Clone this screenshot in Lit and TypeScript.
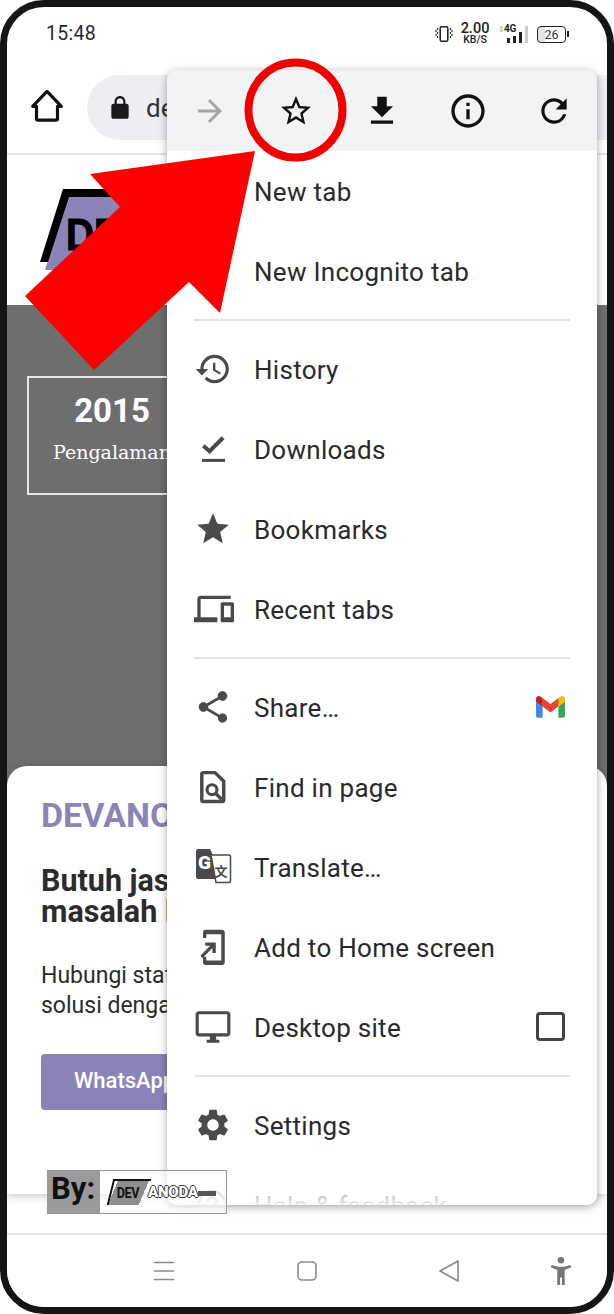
import { LitElement, html, css, svg } from "lit";
import { customElement } from "lit/decorators.js";

const ic = (d: string, size = 36, vb = "0 0 24 24") => html`
  <svg width=${size} height=${size} viewBox=${vb}><path d=${d} fill="currentColor"></path></svg>
`;

const P = {
  lock: "M18 8h-1V6c0-2.76-2.24-5-5-5S7 3.24 7 6v2H6c-1.1 0-2 .9-2 2v10c0 1.1.9 2 2 2h12c1.1 0 2-.9 2-2V10c0-1.1-.9-2-2-2zM9 6c0-1.66 1.34-3 3-3s3 1.34 3 3v2H9V6z",
  forward: "M12 4l-1.41 1.41L16.17 11H4v2h12.17l-5.58 5.59L12 20l8-8z",
  starO: "M22 9.24l-7.19-.62L12 2 9.19 8.63 2 9.24l5.46 4.73L5.82 21 12 17.27 18.18 21l-1.63-7.03L22 9.24zM12 15.4l-3.76 2.27 1-4.28-3.32-2.88 4.38-.38L12 6.1l1.71 4.04 4.38.38-3.32 2.88 1 4.28L12 15.4z",
  download: "M19 9h-4V3H9v6H5l7 7 7-7zM5 18v2h14v-2H5z",
  info: "M11 7h2v2h-2zm0 4h2v6h-2zm1-9C6.48 2 2 6.48 2 12s4.48 10 10 10 10-4.48 10-10S17.52 2 12 2zm0 18c-4.41 0-8-3.59-8-8s3.59-8 8-8 8 3.59 8 8-3.59 8-8 8z",
  refresh: "M17.65 6.35A7.958 7.958 0 0 0 12 4c-4.42 0-7.99 3.58-7.99 8s3.57 8 7.99 8c3.73 0 6.84-2.55 7.73-6h-2.08A5.99 5.99 0 0 1 12 18c-3.31 0-6-2.69-6-6s2.69-6 6-6c1.66 0 3.14.69 4.22 1.78L13 11h7V4l-2.35 2.35z",
  plus: "M19 13h-6v6h-2v-6H5v-2h6V5h2v6h6v2z",
  incognito: "M17.06 13c-1.86 0-3.42 1.33-3.82 3.1-.95-.41-1.82-.3-2.48-.01C10.35 14.31 8.79 13 6.94 13 4.77 13 3 14.79 3 17s1.77 4 3.94 4c2.06 0 3.74-1.62 3.9-3.68.34-.24 1.23-.69 2.32.02.18 2.05 1.84 3.66 3.9 3.66 2.17 0 3.94-1.79 3.94-4s-1.77-4-3.94-4zM22 10.5H2V12h20v-1.5zm-6.47-7.87c-.22-.49-.78-.75-1.31-.58L12 2.79l-2.23-.74-.05-.01c-.53-.15-1.09.13-1.29.64L6 9h12l-2.44-6.32-.03-.05z",
  history: "M13 3a9 9 0 0 0-9 9H1l3.89 3.89.07.14L9 12H6c0-3.87 3.13-7 7-7s7 3.13 7 7-3.13 7-7 7c-1.93 0-3.68-.79-4.94-2.06l-1.42 1.42A8.954 8.954 0 0 0 13 21a9 9 0 0 0 0-18zm-1 5v5l4.28 2.54.72-1.21-3.5-2.08V8H12z",
  star: "M12 17.27L18.18 21l-1.64-7.03L22 9.24l-7.19-.61L12 2 9.19 8.63 2 9.24l5.46 4.73L5.82 21z",
  devices: "M4 6h18V4H4c-1.1 0-2 .9-2 2v11H0v3h14v-3H4V6zm19 2h-6c-.55 0-1 .45-1 1v10c0 .55.45 1 1 1h6c.55 0 1-.45 1-1V9c0-.55-.45-1-1-1zm-1 9h-4v-7h4v7z",
  share: "M18 16.08c-.76 0-1.44.3-1.96.77L8.91 12.7c.05-.23.09-.46.09-.7s-.04-.47-.09-.7l7.05-4.11c.54.5 1.25.81 2.04.81 1.66 0 3-1.34 3-3s-1.34-3-3-3-3 1.34-3 3c0 .24.04.47.09.7L8.04 9.81C7.5 9.31 6.79 9 6 9c-1.66 0-3 1.34-3 3s1.34 3 3 3c.79 0 1.5-.31 2.04-.81l7.12 4.16c-.05.21-.08.43-.08.65 0 1.61 1.31 2.92 2.92 2.92s2.92-1.31 2.92-2.92-1.31-2.92-2.92-2.92z",
  desktop: "M21 2H3c-1.1 0-2 .9-2 2v12c0 1.1.9 2 2 2h7v2H8v2h8v-2h-2v-2h7c1.1 0 2-.9 2-2V4c0-1.1-.9-2-2-2zm0 14H3V4h18v12z",
  settings: "M19.14 12.94c.04-.3.06-.61.06-.94 0-.32-.02-.64-.07-.94l2.03-1.58a.49.49 0 0 0 .12-.61l-1.92-3.32a.488.488 0 0 0-.59-.22l-2.39.96c-.5-.38-1.03-.7-1.62-.94l-.36-2.54a.484.484 0 0 0-.48-.41h-3.84c-.24 0-.43.17-.47.41l-.36 2.54c-.59.24-1.13.57-1.62.94l-2.39-.96c-.22-.08-.47 0-.59.22L2.74 8.87c-.12.21-.08.47.12.61l2.03 1.58c-.05.3-.09.63-.09.94s.02.64.07.94l-2.03 1.58a.49.49 0 0 0-.12.61l1.92 3.32c.12.22.37.29.59.22l2.39-.96c.5.38 1.03.7 1.62.94l.36 2.54c.05.24.24.41.48.41h3.84c.24 0 .44-.17.47-.41l.36-2.54c.59-.24 1.13-.56 1.62-.94l2.39.96c.22.08.47 0 .59-.22l1.92-3.32c.12-.22.07-.47-.12-.61l-2.01-1.58zM12 15.6c-1.98 0-3.6-1.62-3.6-3.6s1.62-3.6 3.6-3.6 3.6 1.62 3.6 3.6-1.62 3.6-3.6 3.6z",
  help: "M11 18h2v-2h-2v2zm1-16C6.48 2 2 6.48 2 12s4.48 10 10 10 10-4.48 10-10S17.52 2 12 2zm0 18c-4.41 0-8-3.59-8-8s3.59-8 8-8 8 3.59 8 8-3.59 8-8 8zm0-14c-2.21 0-4 1.79-4 4h2c0-1.1.9-2 2-2s2 .9 2 2c0 2-3 1.75-3 5h2c0-2.25 3-2.5 3-5 0-2.21-1.79-4-4-4z",
};

const homeIcon = html`
  <svg width="40" height="40" viewBox="0 0 24 24" fill="none" stroke="#111" stroke-width="1.900" stroke-linejoin="round">
    <path d="M12 3.200 3.400 12.200h2.300v7.300a1 1 0 0 0 1 1h10.600a1 1 0 0 0 1-1v-7.300h2.300z"></path>
  </svg>
`;

const doneIcon = html`
  <svg width="36" height="36" viewBox="0 0 24 24" fill="none" stroke="currentColor">
    <path d="M6.200 9.800l4.200 3.700 9-9" stroke-width="2.700"></path>
    <path d="M5.300 19.600h15.400" stroke-width="2"></path>
  </svg>
`;

const findIcon = html`
  <svg width="36" height="36" viewBox="0 0 24 24" fill="none" stroke="currentColor">
    <path d="M6.200 2.400h7.800l5.800 5.800v12.400a1 1 0 0 1-1 1H6.200a1 1 0 0 1-1-1V3.400a1 1 0 0 1 1-1z" stroke-width="2.300"></path>
    <circle cx="12" cy="13.800" r="3.300" stroke-width="2.100"></circle>
    <path d="M14.400 16.200 18.500 20.300" stroke-width="2.300"></path>
  </svg>
`;

const translateIcon = html`
  <svg width="38" height="38" viewBox="0 0 38 38">
    <path d="M4 1h12l2 4 8 26H4a2 2 0 0 1-2-2V3a2 2 0 0 1 2-2z" fill="#4a4a4a"></path>
    <path d="M17 7h18a1.500 1.500 0 0 1 1.500 1.500V33a1.500 1.500 0 0 1-1.500 1.500H22z" fill="#fff" stroke="#4a4a4a" stroke-width="1.500"></path>
    <text x="10.500" y="21" font-family="Roboto" font-weight="900" font-size="19" fill="#fff" text-anchor="middle">G</text>
    <text x="27" y="28" font-family="'Noto Sans CJK SC'" font-weight="700" font-size="13" fill="#4a4a4a" text-anchor="middle">文</text>
  </svg>
`;

const addHomeIcon = html`
  <svg width="36" height="38" viewBox="0 0 24 25" fill="currentColor">
    <path d="M8 1h10.500a2 2 0 0 1 2 2v19.500a2 2 0 0 1-2 2H8a2 2 0 0 1-2-2V19h2.200v2.500h10V4h-10v2.500H6V3a2 2 0 0 1 2-2z"></path>
    <path d="M7.500 9.500h7v7h-2.200v-3.300l-6.600 6.600-1.500-1.500 6.600-6.600H7.500z"></path>
  </svg>
`;

const gmailIcon = html`
  <svg width="29" height="22" viewBox="0 0 256 193">
    <path d="M58.182 192.05V93.14L27.507 65.077 0 49.504v125.091c0 9.658 7.825 17.455 17.455 17.455h40.727Z" fill="#4285F4"></path>
    <path d="M197.818 192.05h40.727c9.659 0 17.455-7.826 17.455-17.455V49.505l-31.156 17.837-27.026 25.798v98.91Z" fill="#34A853"></path>
    <path d="M58.182 93.14l-4.174-38.647 4.174-36.989L128 69.868l69.818-52.364 4.669 34.992-4.669 40.644L128 145.504z" fill="#EA4335"></path>
    <path d="M197.818 17.504V93.14L256 49.504V26.231c0-21.585-24.64-33.89-41.89-20.945l-16.292 12.218Z" fill="#FBBC04"></path>
    <path d="M0 49.504l26.759 20.07L58.182 93.14V17.504L41.89 5.286C24.61-7.66 0 4.646 0 26.23v23.273Z" fill="#C5221F"></path>
  </svg>
`;

const checkbox = html`<span class="check"></span>`;

type Item = { label: string; icon: unknown; end?: unknown };

const groups: Item[][] = [
  [
    { label: "New tab", icon: ic(P.plus) },
    { label: "New Incognito tab", icon: ic(P.incognito) },
  ],
  [
    { label: "History", icon: ic(P.history, 38) },
    { label: "Downloads", icon: doneIcon },
    { label: "Bookmarks", icon: ic(P.star, 38) },
    { label: "Recent tabs", icon: ic(P.devices, 40) },
  ],
  [
    { label: "Share…", icon: ic(P.share, 38), end: gmailIcon },
    { label: "Find in page", icon: findIcon },
    { label: "Translate…", icon: translateIcon },
    { label: "Add to Home screen", icon: addHomeIcon },
    { label: "Desktop site", icon: ic(P.desktop, 38), end: checkbox },
  ],
  [
    { label: "Settings", icon: ic(P.settings, 38) },
    { label: "Help & feedback", icon: ic(P.help, 36) },
  ],
];

@customElement("app-root")
export class AppRoot extends LitElement {
  renderRow(it: Item) {
    return html`
      <div class="row">
        <span class="row-icon">${it.icon}</span>
        <span class="row-label">${it.label}</span>
        ${it.end ? html`<span class="row-end">${it.end}</span>` : ""}
      </div>
    `;
  }

  render() {
    return html`
      <div class="phone">
        <header class="status">
          <span class="time">15:48</span>
          <div class="status-icons">
            <svg class="vibrate" width="18" height="16" viewBox="0 0 18 16" fill="none" stroke="#222">
              <rect x="5.200" y="0.800" width="7.600" height="14.400" rx="1.500" stroke-width="1.600"></rect>
              <path d="M2.500 2v2M1 4v2M2.500 6v2M1 8v2M2.500 10v2M15.500 2v2M17 4v2M15.500 6v2M17 8v2M15.500 10v2" stroke-width="1.200"></path>
            </svg>
            <div class="speed"><b>2.00</b><small>KB/S</small></div>
            <div class="signal">
              <span class="arrows">⇕</span>
              <span class="g">4G</span>
              <div class="bars">
                <i style="height:5px"></i><i style="height:7px"></i><i style="height:11px"></i><i class="off" style="height:17px"></i>
              </div>
            </div>
            <div class="battery"><span class="level">26</span></div>
          </div>
        </header>

        <div class="toolbar">
          <span class="home">${homeIcon}</span>
          <div class="pill">
            <span class="lock">${ic(P.lock, 26)}</span>
            <span class="url">devanoda.com</span>
          </div>
        </div>

        <main class="page">
          <section class="brand">
            <svg width="170" height="90" viewBox="0 0 170 90">
              <path d="M28 9H140L120 82H5z" fill="#8a84b9"></path>
              <path d="M0 74 23 1H110V9H29L8 74z" fill="#000"></path>
              <text x="26" y="62" font-family="'Liberation Sans'" font-weight="700" font-size="44" fill="#000" stroke="#000" stroke-width="1" textLength="80" lengthAdjust="spacingAndGlyphs">DEV</text>
            </svg>
          </section>

          <section class="hero">
            <div class="stat">
              <strong>2015</strong>
              <span>Pengalaman</span>
            </div>
          </section>

          <section class="card">
            <h2>DEVANODA</h2>
            <h3>Butuh jasa perbaikan<br />masalah laptop?</h3>
            <p>Hubungi staf kami untuk<br />solusi dengan harga terbaik</p>
            <a class="wa">WhatsApp Kami</a>
          </section>
        </main>

        <nav class="nav">
          <svg width="22" height="20" viewBox="0 0 22 20" stroke="#8a8a8a" stroke-width="1.500"><path d="M1 1.500h20M1 10h20M1 18.500h20"></path></svg>
          <svg width="20" height="20" viewBox="0 0 20 20" fill="none" stroke="#8a8a8a" stroke-width="1.600"><rect x="1" y="1" width="18" height="18" rx="4"></rect></svg>
          <svg width="20" height="22" viewBox="0 0 20 22" fill="none" stroke="#8a8a8a" stroke-width="1.600" stroke-linejoin="round"><path d="M19 1 1 11l18 10z"></path></svg>
          <svg class="person" width="22" height="28" viewBox="0 0 22 30" fill="#777"><circle cx="11" cy="3.500" r="3.500"></circle><path d="M1 8.500 0 11l7 3v7.500V30h3v-8h2v8h3V14l7-3-1-2.500-7 2h-6z"></path></svg>
        </nav>

        <aside class="menu">
          <div class="menu-bar">
            <span class="off">${ic(P.forward, 36)}</span>
            <span>${ic(P.starO, 36)}</span>
            <span>${ic(P.download, 38)}</span>
            <span>${ic(P.info, 40)}</span>
            <span>${ic(P.refresh, 38)}</span>
          </div>
          ${groups.map(
            (g, i) => html`
              ${i > 0 ? html`<hr />` : ""}
              ${g.map((it) => this.renderRow(it))}
            `
          )}
          <div class="fade"></div>
        </aside>

        <div class="by">
          <span class="by-label">By:</span>
          <div class="by-logo">
            <span class="mini"><b>DEV</b></span>
            <span class="anoda">ANODA</span>
            <span class="tail"></span>
          </div>
        </div>

        <svg class="marks" width="614" height="1314" viewBox="0 0 614 1314">
          ${svg`<polygon points="255,151 90,174 120,207 25,296 94,370 189,282 220,313" fill="#fe0000"></polygon>
          <ellipse cx="295.500" cy="110" rx="47" ry="47.500" fill="none" stroke="#f20000" stroke-width="8"></ellipse>`}
        </svg>
      </div>
    `;
  }

  static styles = css`
    :host {
      display: block;
      width: 614px;
      height: 1314px;
      font-family: Roboto, "Noto Sans", sans-serif;
      color: #222;
    }
    .phone {
      position: relative;
      box-sizing: border-box;
      width: 614px;
      height: 1314px;
      border: 7px solid #151515;
      border-radius: 44px;
      background: #fff;
      display: flex;
      flex-direction: column;
      overflow: hidden;
    }
    .status {
      height: 52px;
      flex: none;
      display: flex;
      align-items: center;
      justify-content: space-between;
      padding: 0 39px 0 39px;
    }
    .time {
      font-size: 19.500px;
      letter-spacing: 0.3px;
      color: #2a2a2a;
    }
    .status-icons {
      display: flex;
      align-items: center;
    }
    .vibrate {
      margin-top: 2px;
    }
    .speed {
      display: flex;
      flex-direction: column;
      align-items: center;
      width: 28px;
      margin-left: 8px;
      color: #222;
    }
    .speed b {
      font-size: 14.500px;
      font-weight: 500;
      line-height: 12px;
    }
    .speed small {
      font-size: 10.500px;
      font-weight: 500;
      line-height: 9px;
    }
    .signal {
      position: relative;
      width: 30px;
      height: 18px;
      margin: 1px 0 0 9px;
    }
    .arrows {
      position: absolute;
      left: 0;
      top: 0;
      font-size: 8px;
      line-height: 9px;
      color: #aaa;
    }
    .g {
      position: absolute;
      left: 6px;
      top: -1px;
      font-size: 10px;
      line-height: 10px;
      font-weight: 700;
      letter-spacing: -0.3px;
    }
    .bars {
      position: absolute;
      right: 0;
      bottom: 0;
      display: flex;
      align-items: flex-end;
      gap: 3px;
    }
    .bars i {
      display: block;
      width: 3px;
      background: #222;
    }
    .bars i.off {
      background: #ccc;
    }
    .battery {
      position: relative;
      box-sizing: border-box;
      width: 29px;
      height: 17px;
      margin: 2px 2px 0 9px;
      border: 1.500px solid #222;
      border-radius: 4px;
      background: linear-gradient(90deg, #e4e4e4 26%, #fff 26%);
      display: flex;
      align-items: center;
      justify-content: center;
    }
    .battery::after {
      content: "";
      position: absolute;
      right: -4px;
      top: 4px;
      width: 2px;
      height: 6px;
      background: #222;
    }
    .level {
      font-size: 12.500px;
      color: #333;
    }
    .toolbar {
      height: 94px;
      flex: none;
      box-sizing: content-box;
      display: flex;
      align-items: center;
      padding-left: 20px;
      gap: 20px;
      border-bottom: 2px solid #e4e4e4;
      overflow: hidden;
      color: #111;
    }
    .home {
      display: flex;
    }
    .pill {
      flex: 1;
      height: 65px;
      margin-top: 3px;
      border-radius: 33px 0 0 33px;
      background: #eceef1;
      display: flex;
      align-items: center;
      padding-left: 20px;
      gap: 13px;
      font-size: 26px;
      color: #333;
    }
    .lock {
      display: flex;
      color: #1a1a1a;
    }
    .page {
      flex: 1;
      min-height: 0;
      overflow: hidden;
      display: flex;
      flex-direction: column;
    }
    .brand {
      height: 150px;
      flex: none;
      box-sizing: border-box;
      padding: 33px 0 0 33px;
    }
    .hero {
      height: 485px;
      flex: none;
      box-sizing: border-box;
      padding: 71px 0 0 20px;
      background: #6e6e6e;
    }
    .stat {
      box-sizing: border-box;
      width: 170px;
      height: 119px;
      border: 2px solid #e6e6e6;
      display: flex;
      flex-direction: column;
      align-items: center;
      color: #fff;
    }
    .stat strong {
      font-size: 33px;
      font-weight: 700;
      margin-top: 13px;
      line-height: 40px;
    }
    .stat span {
      font-family: "DejaVu Serif", "Liberation Serif", serif;
      font-size: 19px;
      margin-top: 10px;
      white-space: nowrap;
    }
    .card {
      position: relative;
      height: 428px;
      flex: none;
      margin-top: -24px;
      box-sizing: border-box;
      padding: 29px 0 0 34px;
      background: #fff;
      border-radius: 20px 20px 0 0;
      box-shadow: 0 2px 10px rgba(0, 0, 0, 0.22);
      white-space: nowrap;
    }
    .card h2 {
      margin: 0;
      font-size: 34px;
      line-height: 40px;
      font-weight: 700;
      color: #8a84b9;
    }
    .card h3 {
      margin: 31px 0 0;
      font-size: 30.500px;
      line-height: 30.500px;
      font-weight: 700;
      color: #2c2c2c;
    }
    .card p {
      margin: 34px 0 0;
      font-size: 23px;
      line-height: 30px;
      color: #2c2c2c;
    }
    .wa {
      display: block;
      width: 220px;
      height: 56px;
      margin-top: 33px;
      box-sizing: border-box;
      padding: 14px 0 0 33px;
      border-radius: 4px;
      background: #8a84b9;
      color: #fff;
      font-size: 22px;
      font-weight: 500;
    }
    .nav {
      height: 74px;
      flex: none;
      box-sizing: border-box;
      border-top: 2px solid #e2e2e2;
      background: #fff;
      display: flex;
      align-items: center;
      gap: 122px;
      padding-left: 146px;
    }
    .nav .person {
      margin-left: -31px;
    }
    .menu {
      position: absolute;
      left: 160px;
      top: 63px;
      width: 430px;
      height: 1135px;
      overflow: hidden;
      background: #fff;
      border-radius: 10px;
      box-shadow: 0 2px 8px rgba(0, 0, 0, 0.35);
    }
    .menu-bar {
      height: 81px;
      background: #f1f3f4;
      display: grid;
      grid-template-columns: repeat(5, 1fr);
      align-items: center;
      justify-items: center;
      color: #111;
    }
    .menu-bar span {
      display: flex;
    }
    .menu-bar .off {
      color: #a6a6a6;
    }
    .row {
      height: 80px;
      display: flex;
      align-items: center;
      padding: 0 32px 0 0;
    }
    .row-icon {
      width: 87px;
      padding-left: 27px;
      box-sizing: border-box;
      flex: none;
      display: flex;
      color: #4a4a4a;
    }
    .row-label {
      flex: 1;
      margin-top: 1px;
      font-size: 26px;
      letter-spacing: 0.28px;
      color: #2a2a2a;
      white-space: nowrap;
    }
    .row-end {
      display: flex;
    }
    .check {
      display: block;
      box-sizing: border-box;
      width: 29px;
      height: 29px;
      margin-top: -2px;
      border: 3px solid #444;
      border-radius: 4px;
    }
    hr {
      margin: 8px 27px 8px 27px;
      border: 0;
      height: 2px;
      background: #e2e2e2;
    }
    .fade {
      position: absolute;
      left: 0;
      right: 0;
      bottom: 0;
      height: 30px;
      background: linear-gradient(rgba(255, 255, 255, 0.3), rgba(255, 255, 255, 0.92));
    }
    .by {
      position: absolute;
      left: 40px;
      top: 1163px;
      display: flex;
      width: 180px;
      height: 44px;
      box-sizing: border-box;
      border: 1.500px solid #999;
    }
    .by-label {
      width: 52px;
      flex: none;
      background: #9a9a9a;
      font-size: 31px;
      font-weight: 700;
      line-height: 36px;
      padding-left: 3px;
      box-sizing: border-box;
      color: #111;
    }
    .by-logo {
      flex: 1;
      position: relative;
      background: rgba(255, 255, 255, 0.55);
      display: flex;
      align-items: center;
      padding-left: 10px;
    }
    .mini {
      box-sizing: border-box;
      width: 38px;
      height: 26px;
      padding: 5px 0 0 5px;
      background: linear-gradient(100deg, transparent 8%, #8e8e8e 8%, #8e8e8e 85%, transparent 85%);
      border-left: 2px solid #111;
      border-top: 2px solid #111;
      transform: skewX(-14deg);
      font-size: 14px;
      line-height: 14px;
      letter-spacing: -0.4px;
      color: #111;
    }
    .mini b {
      display: inline-block;
      transform: skewX(14deg) scaleX(0.9);
      transform-origin: left;
    }
    .anoda {
      font-size: 15px;
      font-weight: 900;
      color: #fff;
      text-shadow: -1px 0 #333, 1px 0 #333, 0 -1px #333, 0 1px #333;
      letter-spacing: -0.2px;
    }
    .tail {
      display: block;
      width: 18px;
      height: 5px;
      margin-top: 2px;
      background: #555;
    }
    .marks {
      position: absolute;
      left: -7px;
      top: -7px;
      pointer-events: none;
    }
  `;
}
